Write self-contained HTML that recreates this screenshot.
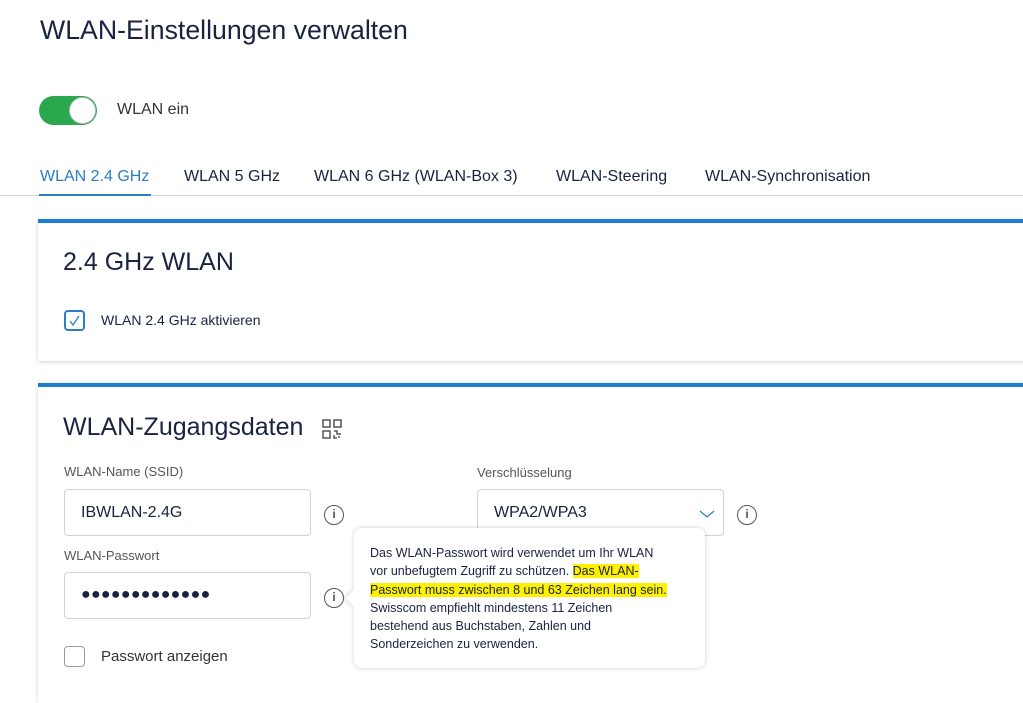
<!DOCTYPE html>
<html><head><meta charset="utf-8"><style>
*{box-sizing:border-box;margin:0;padding:0}
body{width:1023px;height:687px;overflow:hidden;background:#fff;font-family:"Liberation Sans",sans-serif;color:#1a2240;position:relative}
.a{position:absolute}
h1{position:absolute;left:40px;top:15px;font-size:26.7px;font-weight:400;color:#1a2240}
.card{position:absolute;left:38px;width:1000px;border-top:4px solid #1e7fd0;background:#fff;box-shadow:0 1px 4px rgba(0,0,0,.18)}
.h2{position:absolute;font-size:25px;font-weight:400}
.lbl{position:absolute;font-size:13px;color:#555}
.inp{position:absolute;border:1px solid #cfd3d8;border-radius:4px;background:#fff;height:47px;font-size:16px;padding:14px 16px;color:#1a2240}
.info{position:absolute;width:20px;height:20px;border:1.6px solid #555;border-radius:50%;font:bold 12px "Liberation Sans",sans-serif;color:#555;text-align:center;line-height:17px}
.cb{position:absolute;width:21px;height:21px;border:2px solid #2a7ec6;border-radius:4px}
</style></head><body>
<h1>WLAN-Einstellungen verwalten</h1>
<div class="a" style="left:39px;top:96px;width:58px;height:29px;border-radius:15px;background:#2aa84e"></div>
<div class="a" style="left:69px;top:97px;width:27px;height:27px;border-radius:50%;background:#fff;border:1px solid #bbb"></div>
<div class="a" style="left:117px;top:101px;font-size:16px;color:#333">WLAN ein</div>
<div class="a" style="left:0;top:195px;width:1023px;height:1px;background:#d6d6d6"></div>
<div class="a" style="left:40px;top:168px;font-size:16px;color:#2a7ec6">WLAN 2.4 GHz</div>
<div class="a" style="left:39px;top:194px;width:112px;height:2px;background:#2a7ec6"></div>
<div class="a" style="left:184px;top:168px;font-size:16px">WLAN 5 GHz</div>
<div class="a" style="left:314px;top:168px;font-size:16px">WLAN 6 GHz (WLAN-Box 3)</div>
<div class="a" style="left:556px;top:168px;font-size:16px">WLAN-Steering</div>
<div class="a" style="left:705px;top:168px;font-size:16px">WLAN-Synchronisation</div>

<div class="card" style="top:219px;height:142px"></div>
<div class="h2" style="left:63px;top:248px">2.4 GHz WLAN</div>
<div class="cb" style="left:64px;top:310px"><svg width="17" height="17" viewBox="0 0 17 17" style="position:absolute;left:0;top:0"><path d="M4 9l3 4 6-9" stroke="#2a7ec6" stroke-width="1.3" fill="none"/></svg></div>
<div class="a" style="left:101px;top:312px;font-size:14px">WLAN 2.4 GHz aktivieren</div>

<div class="card" style="top:383px;height:320px"></div>
<div class="h2" style="left:63px;top:413px">WLAN-Zugangsdaten</div>
<svg class="a" style="left:322px;top:419px" width="20" height="20" viewBox="0 0 20 20" fill="none" stroke="#555" stroke-width="1.5"><rect x="1" y="1" width="7" height="7"/><rect x="12" y="1" width="7" height="7"/><rect x="1" y="12" width="7" height="7"/><path d="M12 12h3v3h4M12 16v3h3M17 17v2"/></svg>
<div class="lbl" style="left:64px;top:464px">WLAN-Name (SSID)</div>
<div class="inp" style="left:64px;top:489px;width:247px">IBWLAN-2.4G</div>
<div class="info" style="left:324px;top:505px">i</div>
<div class="lbl" style="left:477px;top:465px">Verschlüsselung</div>
<div class="inp" style="left:477px;top:489px;width:247px">WPA2/WPA3</div>
<svg class="a" style="left:699px;top:509px" width="16" height="10"><path d="M1 2l7 6 7-6" stroke="#2a7ec6" fill="none" stroke-width="1.2"/></svg>
<div class="info" style="left:737px;top:505px">i</div>
<div class="lbl" style="left:64px;top:548px">WLAN-Passwort</div>
<div class="inp" style="left:64px;top:572px;width:247px;font-size:16px;letter-spacing:0.3px;padding-top:13px">●●●●●●●●●●●●●</div>
<div class="info" style="left:324px;top:588px">i</div>
<div class="cb" style="left:64px;top:646px;border:1.5px solid #999"></div>
<div class="a" style="left:101px;top:648px;font-size:15px;color:#333">Passwort anzeigen</div>

<div class="a" style="left:354px;top:528px;width:351px;height:140px;background:#fff;border-radius:8px;box-shadow:0 0 5px rgba(0,0,0,.2);padding:16px 16px;font-size:12.5px;line-height:18.3px;color:#1a2240;white-space:nowrap">Das WLAN-Passwort wird verwendet um Ihr WLAN<br>vor unbefugtem Zugriff zu schützen. <span style="background:#fff200">Das WLAN-</span><br><span style="background:#fff200">Passwort muss zwischen 8 und 63 Zeichen lang sein.</span><br>Swisscom empfiehlt mindestens 11 Zeichen<br>bestehend aus Buchstaben, Zahlen und<br>Sonderzeichen zu verwenden.</div>
<div class="a" style="left:348px;top:592px;width:12px;height:12px;background:#fff;transform:rotate(45deg);box-shadow:-2px 2px 3px rgba(0,0,0,.1)"></div>
</body></html>
